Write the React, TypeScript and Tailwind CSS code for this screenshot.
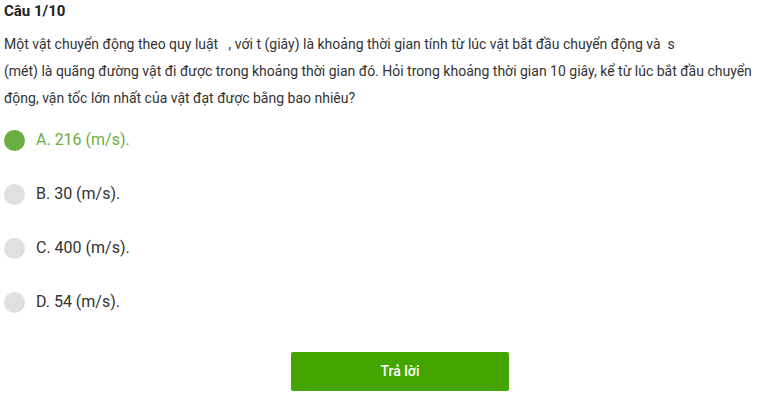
const options = [
  { label: "A. 216 (m/s).", selected: true },
  { label: "B. 30 (m/s).", selected: false },
  { label: "C. 400 (m/s).", selected: false },
  { label: "D. 54 (m/s).", selected: false },
];

export default function App() {
  return (
    <div className="w-[773px] h-[402px] bg-white font-['Roboto',sans-serif] text-[#333]">
      <div className="px-[4px] pt-[1px]">
        <h3 className="text-[15px] font-bold text-[#222] leading-[20px]">Câu 1/10</h3>
        <p className="mt-[10px] text-[14px] leading-[27px] whitespace-nowrap">
          Một vật chuyển động theo quy luật &nbsp; , với t (giây) là khoảng thời gian tính từ lúc vật bắt đầu chuyển động và &nbsp;s
          <br />
          (mét) là quãng đường vật đi được trong khoảng thời gian đó. Hỏi trong khoảng thời gian 10 giây, kể từ lúc bắt đầu chuyển
          <br />
          động, vận tốc lớn nhất của vật đạt được bằng bao nhiêu?
        </p>
      </div>
      <div className="mt-[1px] flex flex-col">
        {options.map((o) => (
          <div key={o.label} className="flex items-center h-[54px] pl-[4px]">
            <span
              className={
                "w-[21px] h-[21px] rounded-full " +
                (o.selected ? "bg-[#6aad40]" : "bg-[#e0e0e0]")
              }
            />
            <span
              className={
                "ml-[11px] text-[16px] " +
                (o.selected ? "text-[#6aad40]" : "text-[#333]")
              }
            >
              {o.label}
            </span>
          </div>
        ))}
      </div>
      <div className="mt-[23px] pl-[291px]">
        <button className="w-[218px] h-[39px] rounded-[2px] bg-[#44a500] text-white text-[14px] font-medium">
          Trả lời
        </button>
      </div>
    </div>
  );
}
